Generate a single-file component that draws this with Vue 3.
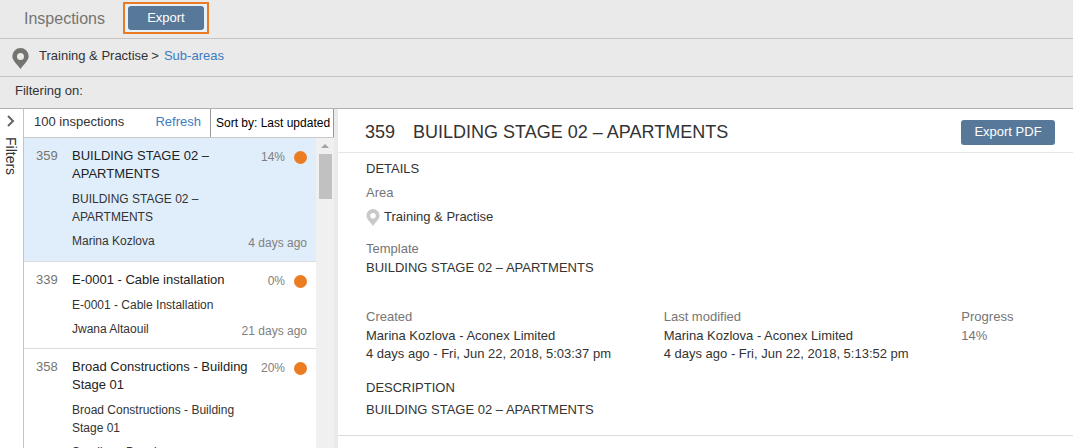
<script setup>
import { ref } from 'vue'

const sort = ref('updated')
const selected = ref(359)

const inspections = [
  { id: 359, title: 'BUILDING STAGE 02 – APARTMENTS', template: 'BUILDING STAGE 02 – APARTMENTS', author: 'Marina Kozlova', progress: '14%', age: '4 days ago' },
  { id: 339, title: 'E-0001 - Cable installation', template: 'E-0001 - Cable Installation', author: 'Jwana Altaouil', progress: '0%', age: '21 days ago' },
  { id: 358, title: 'Broad Constructions - Building Stage 01', template: 'Broad Constructions - Building Stage 01', author: 'Sandiego Bennison', progress: '20%', age: '' },
]

const facts = [
  { label: 'Created', lines: ['Marina Kozlova - Aconex Limited', '4 days ago - Fri, Jun 22, 2018, 5:03:37 pm'] },
  { label: 'Last modified', lines: ['Marina Kozlova - Aconex Limited', '4 days ago - Fri, Jun 22, 2018, 5:13:52 pm'] },
  { label: 'Progress', lines: ['14%'], muted: true },
]
</script>

<template>
  <div class="app">
    <header class="topbar">
      <h1>Inspections</h1>
      <div class="highlight"><button type="button" class="btn">Export</button></div>
    </header>

    <nav class="crumbs" aria-label="Breadcrumb">
      <svg class="pin-large" viewBox="0 0 17 21" aria-hidden="true">
        <path fill="#74756f" fill-rule="evenodd" d="M8.500 0A8.200 8.200 0 0 0 .3 8.200C.3 12.500 5 16 8.500 21 12 16 16.700 12.500 16.700 8.200A8.200 8.200 0 0 0 8.500 0ZM8.500 5A3.500 3.500 0 1 1 8.500 12 3.500 3.500 0 0 1 8.500 5Z" />
      </svg>
      <span>Training &amp; Practise</span>
      <span class="sep">&gt;</span>
      <a href="#sub-areas">Sub-areas</a>
    </nav>

    <div class="filtering">Filtering on:</div>

    <main class="panes">
      <button type="button" class="filters">
        <svg viewBox="0 0 8 12" aria-hidden="true">
          <path d="M1 1 6 6 1 11" fill="none" stroke="#666" stroke-width="2" />
        </svg>
        <span>Filters</span>
      </button>

      <section class="list-pane">
        <div class="list-head">
          <span class="count">100 inspections</span>
          <a href="#refresh">Refresh</a>
          <select v-model="sort" class="sort" aria-label="Sort inspections">
            <option value="updated">Sort by: Last updated</option>
          </select>
        </div>
        <div class="list-body">
          <ul class="list">
            <li
              v-for="item in inspections"
              :key="item.id"
              class="item"
              :class="{ selected: item.id === selected }"
              @click="selected = item.id"
            >
              <span class="num">{{ item.id }}</span>
              <div class="texts">
                <div class="row">
                  <div class="title">{{ item.title }}</div>
                  <div class="progress">{{ item.progress }}<i class="dot"></i></div>
                </div>
                <div class="template">{{ item.template }}</div>
                <div class="row">
                  <div class="author">{{ item.author }}</div>
                  <div class="age">{{ item.age }}</div>
                </div>
              </div>
            </li>
          </ul>
          <div class="scrollbar" aria-hidden="true">
            <svg viewBox="0 0 8 4"><path fill="#a3a3a3" d="M0 4 4 0 8 4Z" /></svg>
            <div class="thumb"></div>
          </div>
        </div>
      </section>

      <article class="detail">
        <div class="detail-head">
          <h2><span>359</span><span>BUILDING STAGE 02 – APARTMENTS</span></h2>
          <button type="button" class="btn pdf">Export PDF</button>
        </div>
        <div class="detail-body">
          <h3>DETAILS</h3>
          <div class="area">
            <div class="label">Area</div>
            <div class="place">
              <svg viewBox="0 0 14 17" aria-hidden="true">
                <path fill="#c9c9c9" fill-rule="evenodd" d="M7 0A6.600 6.600 0 0 0 .4 6.600C.4 10 4 13 7 17 10 13 13.600 10 13.600 6.600A6.600 6.600 0 0 0 7 0ZM7 4A2.800 2.800 0 1 1 7 9.600 2.800 2.800 0 0 1 7 4Z" />
              </svg>
              <span>Training &amp; Practise</span>
            </div>
          </div>
          <div class="field">
            <div class="label">Template</div>
            <div>BUILDING STAGE 02 – APARTMENTS</div>
          </div>
          <div class="facts">
            <div v-for="fact in facts" :key="fact.label" class="field" :class="{ muted: fact.muted }">
              <div class="label">{{ fact.label }}</div>
              <div v-for="line in fact.lines" :key="line">{{ line }}</div>
            </div>
          </div>
          <h3>DESCRIPTION</h3>
          <p>BUILDING STAGE 02 – APARTMENTS</p>
        </div>
      </article>
    </main>
  </div>
</template>

<style>
body {
  margin: 0;
}
</style>

<style scoped>
.app {
  display: flex;
  flex-direction: column;
  height: 100vh;
  overflow: hidden;
  background: #fff;
  color: #333;
  font: 13px/18px "Liberation Sans", Arial, sans-serif;
}
h1, h2, h3, p, ul {
  margin: 0;
  padding: 0;
  font-weight: normal;
}
button, select {
  font: inherit;
}
a {
  color: #3c7cc0;
  text-decoration: none;
}
.topbar, .crumbs, .filtering {
  display: flex;
  flex: none;
  box-sizing: border-box;
  background: #eaeaea;
  border-bottom: 1px solid #c4c4c4;
}
.topbar {
  height: 39px;
  gap: 18px;
  padding: 2px 0 0 24px;
}
.topbar h1 {
  color: #75756f;
  font-size: 16px;
  line-height: 34px;
}
.highlight {
  height: 28px;
  border: 2px solid #ea7b22;
  background: #e8f1f8;
  padding: 0 3px;
  display: flex;
  align-items: center;
}
.btn {
  box-sizing: border-box;
  width: 76px;
  height: 24px;
  padding: 0;
  border: 0;
  border-radius: 3px;
  background: #587899;
  color: #fff;
}
.pdf {
  width: 94px;
  height: 25px;
}
.crumbs {
  height: 38px;
  padding: 8px 0 0 12px;
}
.pin-large {
  width: 17px;
  height: 21px;
  margin: 1px 10px 0 0;
}
.sep {
  margin: 0 5px 0 3px;
}
.filtering {
  height: 32px;
  padding: 5px 0 0 15px;
  border-color: #b0b0b0;
}
.panes {
  display: flex;
  flex: 1;
  min-height: 0;
}
.filters {
  display: flex;
  flex-direction: column;
  align-items: center;
  box-sizing: border-box;
  width: 24px;
  padding: 6px 2px 0 0;
  gap: 10px;
  border: 0;
  border-right: 1px solid #c4c4c4;
  background: #fff;
  color: #333;
  font-size: 14px;
}
.filters svg {
  width: 8px;
  height: 12px;
}
.filters span {
  writing-mode: vertical-rl;
}
.list-pane {
  display: flex;
  flex-direction: column;
  width: 310px;
  flex: none;
}
.list-head {
  display: flex;
  box-sizing: border-box;
  height: 29px;
  padding-left: 10px;
  border-bottom: 1px solid #c8c8c8;
  line-height: 26px;
}
.list-head a {
  margin: 0 9px 0 auto;
}
.sort {
  appearance: none;
  box-sizing: border-box;
  width: 124px;
  padding: 0 0 0 5px;
  border: solid #999;
  border-width: 0 1px;
  border-radius: 0;
  background: #fff;
  color: #000;
  font-size: 12px;
}
.list-body {
  display: flex;
  flex: 1;
  min-height: 0;
}
.list {
  flex: 1;
  overflow: hidden;
  list-style: none;
}
.item {
  display: flex;
  padding: 9px 9px 8px 12px;
  border-bottom: 1px solid #dcdcdc;
}
.selected {
  background: #e0eefc;
  padding-bottom: 9px;
}
.num {
  flex: none;
  width: 36px;
  color: #75756f;
}
.texts {
  flex: 1;
}
.row {
  display: flex;
  justify-content: space-between;
}
.title {
  color: #222;
}
.template {
  width: 170px;
  margin: 7px 0 6px;
  font-size: 12px;
}
.author {
  font-size: 12px;
}
.progress, .age {
  padding-top: 2px;
  color: #808080;
  font-size: 12px;
  white-space: nowrap;
}
.progress {
  display: flex;
  align-items: center;
  align-self: flex-start;
  gap: 9px;
  height: 16px;
}
.dot {
  width: 13px;
  height: 13px;
  border-radius: 50%;
  background: #ec7c22;
}
.scrollbar {
  display: flex;
  flex-direction: column;
  align-items: center;
  width: 18px;
  background: #f0f0f0;
}
.scrollbar svg {
  width: 8px;
  height: 4px;
  margin: 6px 0;
}
.thumb {
  width: 13px;
  height: 45px;
  background: #c1c1c1;
}
.detail {
  flex: 1;
  min-width: 0;
  border-left: 4px solid #eaeaea;
}
.detail-head {
  display: flex;
  align-items: center;
  justify-content: space-between;
  box-sizing: border-box;
  height: 44px;
  padding: 3px 18px 0 27px;
  border-bottom: 1px solid #e6e6e6;
}
.detail-head h2 {
  display: flex;
  gap: 18px;
  font-size: 18px;
}
.detail-body {
  padding: 7px 0 16px 28px;
  border-bottom: 1px solid #dcdcdc;
}
.label, .muted {
  color: #757575;
}
.area {
  margin: 6px 0 14px;
}
.place {
  display: flex;
  align-items: center;
  gap: 4px;
  margin-top: 6px;
}
.place svg {
  width: 14px;
  height: 17px;
}
h3 {
  font-size: 13px;
}
.field .label {
  margin-bottom: 1px;
}
.facts {
  display: grid;
  grid-template-columns: 8fr 8fr 3fr;
  margin: 31px 0 16px;
}
.detail-body p {
  margin-top: 4px;
}
</style>
